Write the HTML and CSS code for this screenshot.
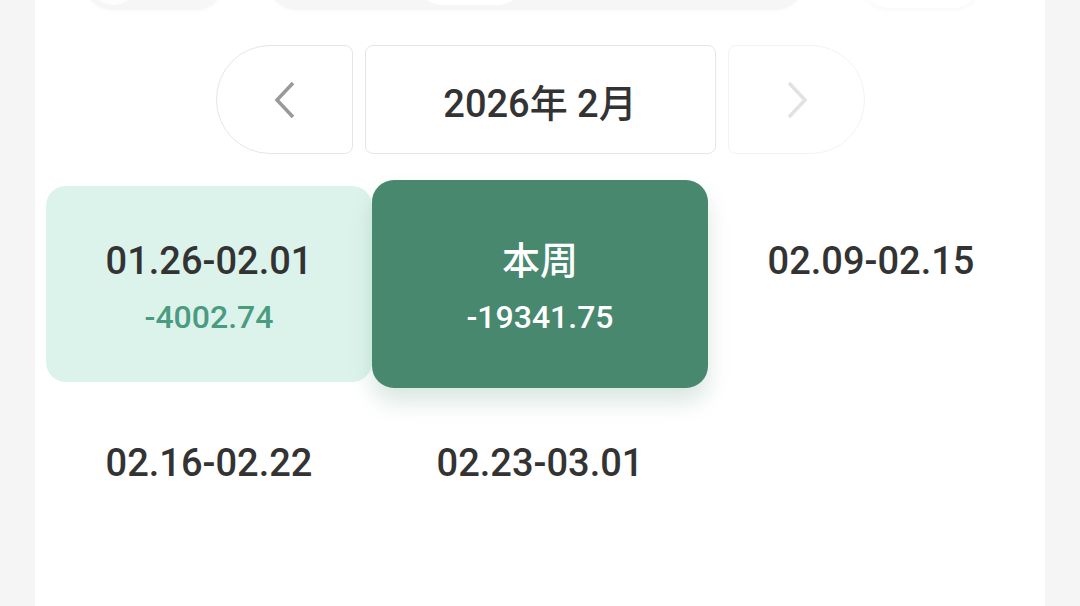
FILE: index.html
```html
<!DOCTYPE html>
<html>
<head>
<meta charset="utf-8">
	<title>周账单</title>
	<link rel="stylesheet" href="styles.css">
</head>
<body>
<div class="panel">
	<div class="tabs">
		<div class="pill pill-a"><span class="knob knob-a"></span></div>
		<div class="pill pill-b"><span class="knob knob-b"></span></div>
		<div class="pill pill-c"></div>
	</div>
	<div class="nav">
		<button class="arrow prev">
			<svg width="26" height="38" viewBox="0 0 26 38"><polyline points="21,2 5,19 21,36" fill="none" stroke="#999" stroke-width="3.5"/></svg>
		</button>
		<div class="title">2026年 2月</div>
		<button class="arrow next">
			<svg width="26" height="38" viewBox="0 0 26 38"><polyline points="5,2 21,19 5,36" fill="none" stroke="#e2e2e2" stroke-width="3.5"/></svg>
		</button>
	</div>
	<div class="weeks">
		<div class="week past">
			<p class="label">01.26-02.01</p>
			<p class="amount">-4002.74</p>
		</div>
		<div class="week current">
			<p class="label">本周</p>
			<p class="amount">-19341.75</p>
		</div>
		<div class="week">
			<p class="label">02.09-02.15</p>
		</div>
		<div class="week">
			<p class="label">02.16-02.22</p>
		</div>
		<div class="week">
			<p class="label">02.23-03.01</p>
		</div>
	</div>
</div>
</body>
</html>
```

FILE: styles.css
```css
*{margin: 0;padding: 0;box-sizing: border-box;}
html,body{height: 100%;overflow: hidden;}
body{
	background: #f5f5f5;
	font-family: Roboto, "Noto Sans CJK SC", sans-serif;
	color: #333;
}
.panel{
	display: flow-root;
	margin: 0 35px;
	height: 100%;
	background: #fff;
}
/* 顶部被裁切的标签栏 */
.tabs{
	display: flex;
	height: 60px;
	margin-top: -50px;
	padding-left: 48px;
}
.pill{
	display: flex;
	align-items: flex-end;
	height: 60px;
	border-radius: 30px;
	background: #f6f6f6;
	box-shadow: 0 2px 4px rgba(0,0,0,0.02);
}
.pill-a{width: 142px;padding: 0 0 5px 7px;}
.pill-b{width: 538px;margin-left: 42px;padding: 0 0 5px 150px;}
.pill-c{width: 122px;margin-left: 55px;height: 58px;background: #fff;box-shadow: 0 2px 5px rgba(0,0,0,0.03);}
.knob{
	display: block;
	height: 50px;
	border-radius: 25px;
	background: #fdfdfd;
}
.knob-a{width: 47px;}
.knob-b{width: 106px;background: #fff;}

/* 月份切换 */
.nav{
	display: flex;
	justify-content: center;
	gap: 12px;
	margin-top: 35px;
}
.arrow{
	display: flex;
	align-items: center;
	justify-content: center;
	width: 137px;
	height: 109px;
	background: #fff;
	border: 1px solid #e6e6e6;
}
.prev{border-radius: 54px 8px 8px 54px;}
.next{border-radius: 8px 54px 54px 8px;border-color: #f3f3f3;}
.prev svg{margin-left: 2px;}
.next svg{margin-left: 2px;}
.title{
	display: flex;
	align-items: center;
	justify-content: center;
	width: 351px;
	height: 109px;
	border: 1px solid #e6e6e6;
	border-radius: 8px;
	font-size: 38px;
	font-weight: 500;
	color: #333;
	padding-top: 2px;
}

/* 周列表 */
.weeks{
	display: grid;
	grid-template-columns: repeat(3, 326px);
	grid-auto-rows: 196px;
	column-gap: 5px;
	row-gap: 6px;
	margin-top: 32px;
	padding: 0 11px;
}
.week{
	padding-top: 52px;
	border-radius: 20px;
	text-align: center;
}
.label{
	font-size: 38px;
	line-height: 46px;
	font-weight: 500;
	color: #333;
}
.amount{
	margin-top: 14px;
	font-size: 32px;
	line-height: 38px;
	font-weight: 500;
	color: #4b9b80;
}
.past{background: #dcf3ec;}
.current{
	position: relative;
	margin: -6px -5px;
	padding-top: 58px;
	border-radius: 22px;
	background: #48886f;
	box-shadow: 0 14px 22px rgba(72,136,111,0.2);
}
.current .label,.current .amount{color: #fff;}
```
